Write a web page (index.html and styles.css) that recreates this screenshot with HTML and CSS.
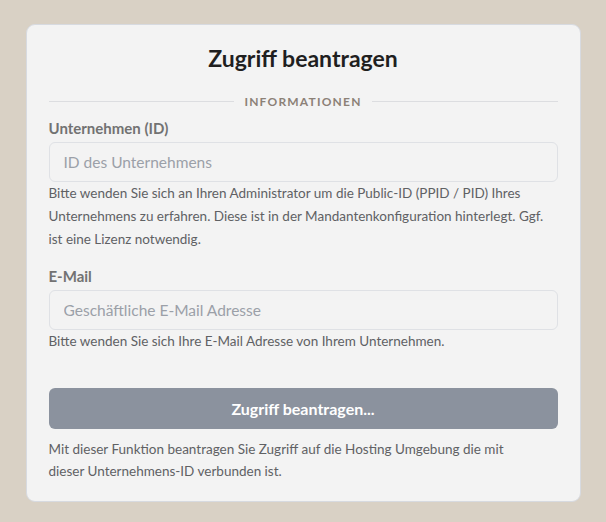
FILE: index.html
```html
<!DOCTYPE html>
<html lang="de">
<head>
<meta charset="utf-8">
<title>Zugriff beantragen</title>
<link rel="stylesheet" href="styles.css">
</head>
<body>
<div class="card">
  <h1 class="title">Zugriff beantragen</h1>
  <div class="divider"><span>INFORMATIONEN</span></div>
  <div class="field">
    <label class="label" for="cid">Unternehmen (ID)</label>
    <input class="input" id="cid" type="text" placeholder="ID des Unternehmens">
    <p class="help">Bitte wenden Sie sich an Ihren Administrator um die Public-ID (PPID / PID) Ihres Unternehmens zu erfahren. Diese ist in der Mandantenkonfiguration hinterlegt. Ggf. ist eine Lizenz notwendig.</p>
  </div>
  <div class="field field-second">
    <label class="label" for="mail">E-Mail</label>
    <input class="input" id="mail" type="text" placeholder="Geschäftliche E-Mail Adresse">
    <p class="help">Bitte wenden Sie sich Ihre E-Mail Adresse von Ihrem Unternehmen.</p>
  </div>
  <button class="btn" type="button">Zugriff beantragen...</button>
  <p class="help footer">Mit dieser Funktion beantragen Sie Zugriff auf die Hosting Umgebung die mit dieser Unternehmens-ID verbunden ist.</p>
</div>
</body>
</html>
```

FILE: styles.css
```css
* { box-sizing: border-box; }
html, body { margin: 0; }
body {
  background: #d9d1c5;
  font-family: Lato, "Open Sans", "Liberation Sans", sans-serif;
  padding-top: 24px;
}
.card {
  width: 555px;
  margin: 0 auto;
  background: #f3f3f3;
  border: 1px solid #d7dae0;
  border-radius: 9px;
  padding: 18px 22px 19px;
}
.title {
  margin: 0;
  text-align: center;
  font-size: 23px;
  line-height: 30px;
  font-weight: 700;
  color: #1f1f1f;
}
.divider {
  margin-top: 20px;
  display: flex;
  align-items: center;
  gap: 10px;
  height: 16px;
}
.divider::before, .divider::after {
  content: "";
  flex: 1;
  height: 1px;
  background: #dcdde0;
}
.divider span {
  font-size: 12px;
  letter-spacing: 1.2px;
  font-weight: 700;
  color: #8c8177;
}
.field { margin-top: 9px; display: flex; flex-direction: column; }
.field-second { margin-top: 15px; }
.label {
  font-size: 15px;
  line-height: 20px;
  font-weight: 700;
  color: #727272;
}
.input {
  margin-top: 4px;
  height: 40px;
  width: 100%;
  border: 1px solid #dfe1e5;
  border-radius: 6px;
  background: #f3f3f3;
  padding: 0 14px;
  font-family: inherit;
  font-size: 15.5px;
  color: #333;
  outline: none;
}
.input::placeholder { color: #9ba0a8; }
.help {
  margin: 0;
  font-size: 13.5px;
  line-height: 23px;
  color: #606164;
}
.btn {
  display: block;
  width: 100%;
  margin-top: 35px;
  height: 41px;
  border: none;
  border-radius: 6px;
  background: #8b929e;
  color: #ffffff;
  font-family: inherit;
  font-size: 16px;
  font-weight: 700;
}
.footer { margin-top: 9px; line-height: 22px; max-width: 480px; }
```
